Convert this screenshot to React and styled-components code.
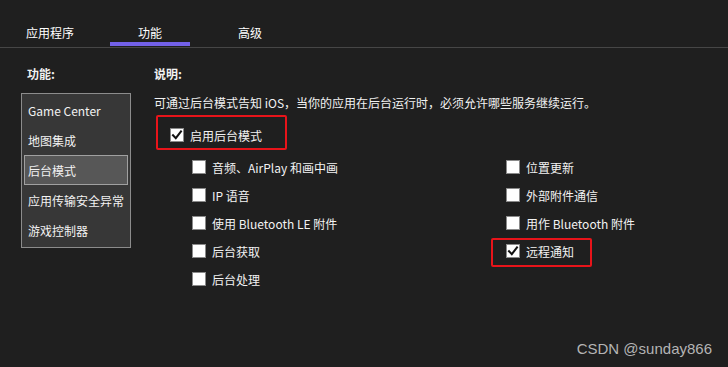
import React from 'react';
import styled, { createGlobalStyle } from 'styled-components';

const GlobalStyle = createGlobalStyle`
  html, body {
    margin: 0;
    padding: 0;
    background: #1f1f1f;
  }
  body {
    font-family: "Noto Sans CJK SC", "Noto Sans", sans-serif;
    font-size: 12px;
    color: #f0f0f0;
  }
`;

const tabs = ['应用程序', '功能', '高级'];
const capabilities = ['Game Center', '地图集成', '后台模式', '应用传输安全异常', '游戏控制器'];

const leftOptions = [
  { label: '音频、AirPlay 和画中画' },
  { label: 'IP 语音' },
  { label: '使用 Bluetooth LE 附件' },
  { label: '后台获取' },
  { label: '后台处理' },
];

const rightOptions = [
  { label: '位置更新' },
  { label: '外部附件通信' },
  { label: '用作 Bluetooth 附件' },
  // red annotation box drawn over the row
  { label: '远程通知', checked: true, mark: { top: 1, left: -15, right: -18, bottom: -2 } },
];

const CheckMark = () => (
  <svg width="12" height="12" viewBox="0 0 12 12">
    <polyline
      points="2,6.2 4.8,9.2 10,2.4"
      fill="none"
      stroke="#111"
      strokeWidth="2"
      strokeLinecap="square"
    />
  </svg>
);

const Option = ({ label, checked, mark }) => (
  <OptionRow $mark={mark}>
    <Box>{checked && <CheckMark />}</Box>
    <span>{label}</span>
  </OptionRow>
);

const App = () => {
  return (
    <Page>
      <GlobalStyle />
      <TabBar>
        {tabs.map((t) => (
          <Tab key={t} $active={t === '功能'}>
            <span>{t}</span>
          </Tab>
        ))}
      </TabBar>
      <Body>
        <Sidebar>
          <Heading $indent={6}>功能:</Heading>
          <List>
            {capabilities.map((c) => (
              <Item key={c} $selected={c === '后台模式'}>
                {c}
              </Item>
            ))}
          </List>
        </Sidebar>
        <Details>
          <Heading>说明:</Heading>
          <Description>
            可通过后台模式告知 iOS，当你的应用在后台运行时，必须允许哪些服务继续运行。
          </Description>
          <MainToggle>
            <Option
              label="启用后台模式"
              checked
              mark={{ top: -6, left: -14, right: -25, bottom: -1 }}
            />
          </MainToggle>
          <OptionGrid>
            <Column>
              {leftOptions.map((o) => (
                <Option key={o.label} {...o} />
              ))}
            </Column>
            <Column>
              {rightOptions.map((o) => (
                <Option key={o.label} {...o} />
              ))}
            </Column>
          </OptionGrid>
        </Details>
      </Body>
      <Watermark>CSDN @sunday866</Watermark>
    </Page>
  );
};

const Page = styled.div`
  position: relative;
  width: 728px;
  height: 367px;
  background: #1f1f1f;
  overflow: hidden;
`;

const TabBar = styled.div`
  display: flex;
  height: 47px;
  border-bottom: 1px solid #464646;
`;

const Tab = styled.div`
  width: 100px;
  display: flex;
  flex-direction: column;
  align-items: center;
  justify-content: flex-end;
  color: #ffffff;

  span {
    line-height: 16px;
    margin-bottom: 1px;
  }

  &::after {
    content: '';
    width: 80px;
    height: 4px;
    margin-bottom: 1px;
    background: ${(p) => (p.$active ? '#7361e8' : 'transparent')};
  }
`;

const Body = styled.div`
  display: flex;
  padding-left: 21px;
`;

const Sidebar = styled.div`
  width: 110px;
  display: flex;
  flex-direction: column;
`;

const Heading = styled.div`
  margin-top: 18px;
  padding-left: ${(p) => p.$indent || 0}px;
  line-height: 16px;
  font-weight: bold;
  color: #f2f2f2;
`;

const List = styled.div`
  margin-top: 11px;
  height: 152px;
  border: 1px solid #8c8c8c;
  background: #373737;
  padding: 1px 2px 0;
  box-sizing: content-box;
`;

const Item = styled.div`
  height: 30px;
  display: flex;
  align-items: center;
  padding-left: 3px;
  box-sizing: border-box;
  white-space: nowrap;
  color: #f2f2f2;
  border: 1px solid ${(p) => (p.$selected ? '#a0a0a0' : 'transparent')};
  background: ${(p) => (p.$selected ? '#575757' : 'transparent')};
`;

const Details = styled.div`
  margin-left: 23px;
  display: flex;
  flex-direction: column;
`;

const Description = styled.div`
  margin-top: 13px;
  line-height: 16px;
  color: #f2f2f2;
`;

const MainToggle = styled.div`
  display: flex;
  margin-top: 10px;
  padding-left: 16px;
`;

const OptionGrid = styled.div`
  display: grid;
  grid-template-columns: 314px 200px;
  margin-top: 4px;
  padding-left: 38px;
`;

const Column = styled.div`
  display: flex;
  flex-direction: column;
  align-items: flex-start;
`;

const OptionRow = styled.div`
  position: relative;
  height: 28px;
  display: flex;
  align-items: center;
  gap: 6px;
  white-space: nowrap;
  color: #f2f2f2;

  ${(p) =>
    p.$mark &&
    `
    &::after {
      content: '';
      position: absolute;
      top: ${p.$mark.top}px;
      left: ${p.$mark.left}px;
      right: ${p.$mark.right}px;
      bottom: ${p.$mark.bottom}px;
      border: 2px solid #e8141a;
      border-radius: 2px;
      pointer-events: none;
    }
  `}
`;

const Box = styled.div`
  width: 14px;
  height: 14px;
  box-sizing: border-box;
  background: #ffffff;
  border: 1px solid #8a8a8a;
  display: flex;
  align-items: center;
  justify-content: center;
  flex-shrink: 0;
`;

const Watermark = styled.div`
  position: absolute;
  right: 16px;
  bottom: 10px;
  font-family: "Liberation Sans", Arial, sans-serif;
  font-size: 15px;
  color: #b4b4b4;
`;

export default App;
